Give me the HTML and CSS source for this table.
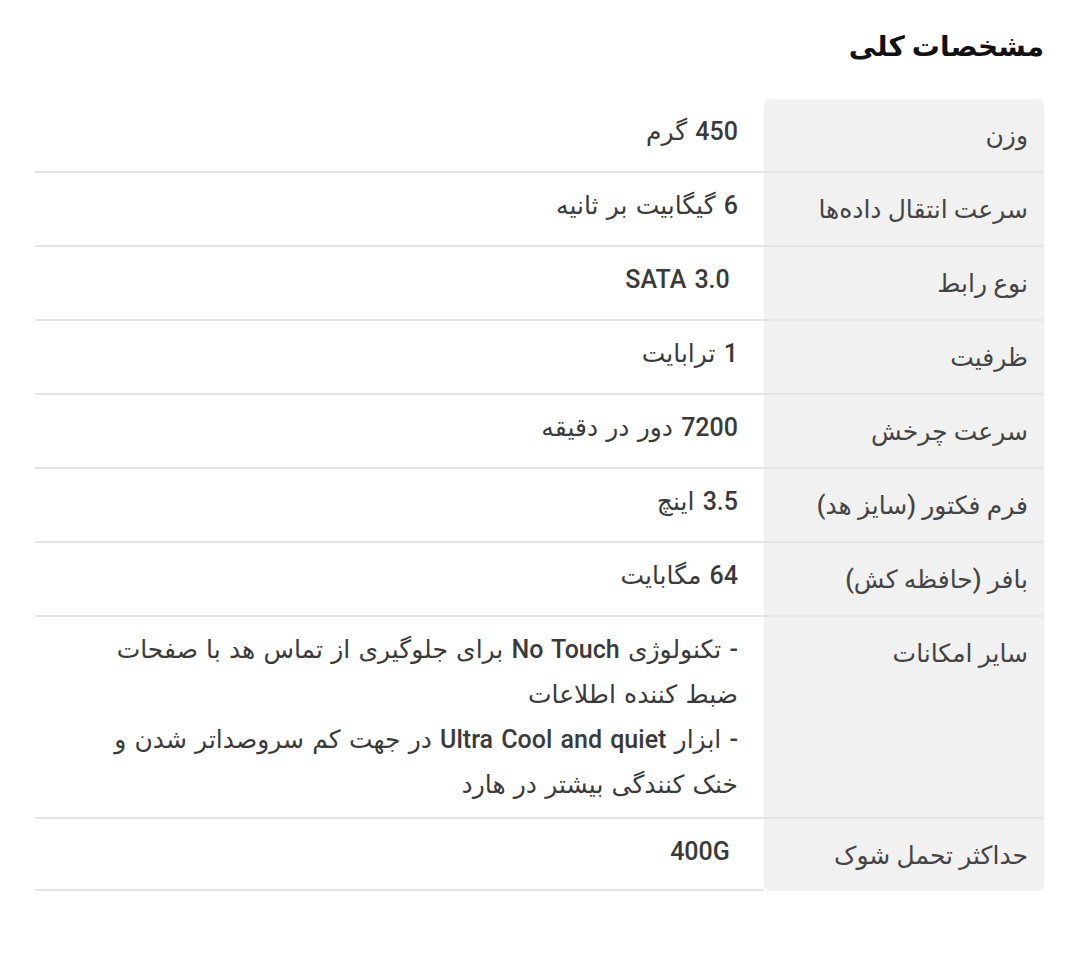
FILE: index.html
```html
<!DOCTYPE html>
<html lang="fa" dir="rtl">
<head>
<meta charset="utf-8">
<title>مشخصات کلی</title>
<link rel="stylesheet" href="styles.css">
</head>
<body>
<section class="specs">
  <h2 class="specs-title">مشخصات کلی</h2>
  <div class="spec-table">
    <div class="spec-label first">وزن</div>
    <div class="spec-value">450 گرم</div>

    <div class="spec-label">سرعت انتقال داده‌ها</div>
    <div class="spec-value">6 گیگابیت بر ثانیه</div>

    <div class="spec-label">نوع رابط</div>
    <div class="spec-value">&nbsp;SATA 3.0</div>

    <div class="spec-label">ظرفیت</div>
    <div class="spec-value">1 ترابایت</div>

    <div class="spec-label">سرعت چرخش</div>
    <div class="spec-value">7200 دور در دقیقه</div>

    <div class="spec-label">فرم فکتور (سایز هد)</div>
    <div class="spec-value">3.5 اینچ</div>

    <div class="spec-label">بافر (حافظه کش)</div>
    <div class="spec-value">64 مگابایت</div>

    <div class="spec-label">سایر امکانات</div>
    <div class="spec-value">- تکنولوژی No Touch برای جلوگیری از تماس هد با صفحات<br>ضبط کننده اطلاعات<br>- ابزار Ultra Cool and quiet در جهت کم سروصداتر شدن و<br>خنک کنندگی بیشتر در هارد</div>

    <div class="spec-label last">حداکثر تحمل شوک</div>
    <div class="spec-value">&nbsp;400G</div>
  </div>
</section>
</body>
</html>
```
FILE: styles.css
```css
html, body {
  margin: 0;
  padding: 0;
  background: #ffffff;
}

body {
  font-family: Roboto, "DejaVu Sans", sans-serif;
  font-weight: 500;
  color: #3c3c3c;
}

.specs {
  direction: rtl;
  padding: 25px 36px 40px 35px;
}

.specs-title {
  margin: 0 0 30px 0;
  font-family: Roboto, "DejaVu Sans", sans-serif;
  font-size: 28px;
  font-weight: 700;
  line-height: 44px;
  color: #111111;
}

.spec-table {
  display: grid;
  grid-template-columns: 280px 1fr;
}

.spec-label {
  background: #f1f1f1;
  padding: 14px 16px 13px 16px;
  font-size: 25px;
  line-height: 45px;
  color: #444444;
  border-bottom: 2px solid #e4e4e4;
}

.spec-label.first {
  border-radius: 6px 6px 0 0;
}

.spec-label.last {
  border-bottom: 0;
  border-radius: 0 0 6px 6px;
}

.spec-value {
  padding: 10px 26px 10px 10px;
  font-size: 25px;
  line-height: 45px;
  color: #3a3a3a;
  word-spacing: 2px;
  border-bottom: 2px solid #e4e4e4;
}
```
